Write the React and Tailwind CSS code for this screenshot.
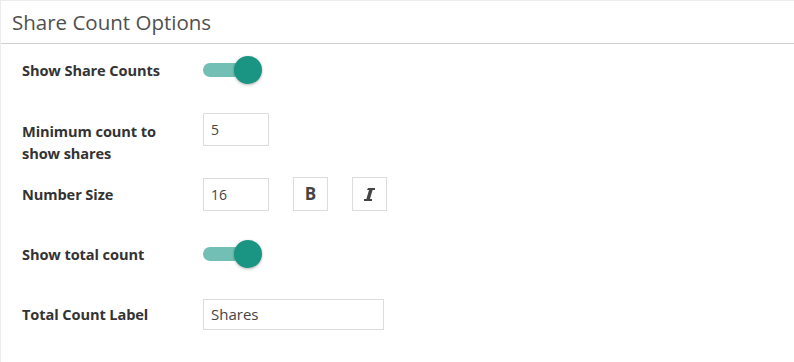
import React from 'react';

const labelFont = { fontFamily: '"Open Sans", "Noto Sans", sans-serif' };

function Toggle() {
  return (
    <div className="relative h-[30px] w-[62px]">
      <div className="absolute left-0 top-[8px] h-[14px] w-[46px] rounded-full bg-[#72c0b5]" />
      <div className="absolute left-[31px] top-[1px] h-[28px] w-[28px] rounded-full bg-[#1a9584] shadow-[0_1px_3px_rgba(0,0,0,0.3)]" />
    </div>
  );
}

function Label({ children, className = '' }) {
  return (
    <div className={`w-[181px] shrink-0 text-[14.6px] font-bold leading-[22px] tracking-[-0.1px] text-[#333] ${className}`}>
      {children}
    </div>
  );
}

function TextBox({ value, className = '' }) {
  return (
    <div className={`flex items-center border border-[#dcdcdc] bg-white px-[7px] text-[14px] text-[#444] ${className}`}>
      {value}
    </div>
  );
}

export default function App() {
  return (
    <div className="h-[362px] w-[794px] bg-white border-t border-l border-[#ececec]" style={labelFont}>
      {/* header */}
      <div className="flex h-[43px] items-center border-b border-[#cfcfcf] pl-[11px]">
        <h2 className="text-[20.5px] font-normal text-[#4f4f4f]">Share Count Options</h2>
      </div>

      <div className="pl-[21px]">
        <div className="flex h-[52px] items-center">
          <Label>Show Share Counts</Label>
          <Toggle />
        </div>

        <div className="flex h-[72px] items-start">
          <Label className="mt-[24px]">
            Minimum count to
            <br />
            show shares
          </Label>
          <TextBox value="5" className="mt-[17px] h-[33px] w-[66px]" />
        </div>

        <div className="flex h-[52px] items-center">
          <Label>Number Size</Label>
          <TextBox value="16" className="h-[33px] w-[66px]" />
          <div className="ml-[24px] flex h-[34px] w-[35px] items-center justify-center border border-[#dcdcdc] text-[17px] font-bold text-[#444]">
            B
          </div>
          <div className="ml-[24px] flex h-[34px] w-[35px] items-center justify-center border border-[#dcdcdc]">
            <svg width="11" height="13" viewBox="0 0 11 13">
              <path d="M4 0h7v2H8.6L6 11h2v2H0v-2h2.4L5 2H3z" fill="#444" />
            </svg>
          </div>
        </div>

        <div className="flex h-[68px] items-center">
          <Label>Show total count</Label>
          <Toggle />
        </div>

        <div className="flex h-[52px] items-center">
          <Label>Total Count Label</Label>
          <TextBox value="Shares" className="h-[31px] w-[181px] text-[15px]" />
        </div>
      </div>
    </div>
  );
}
